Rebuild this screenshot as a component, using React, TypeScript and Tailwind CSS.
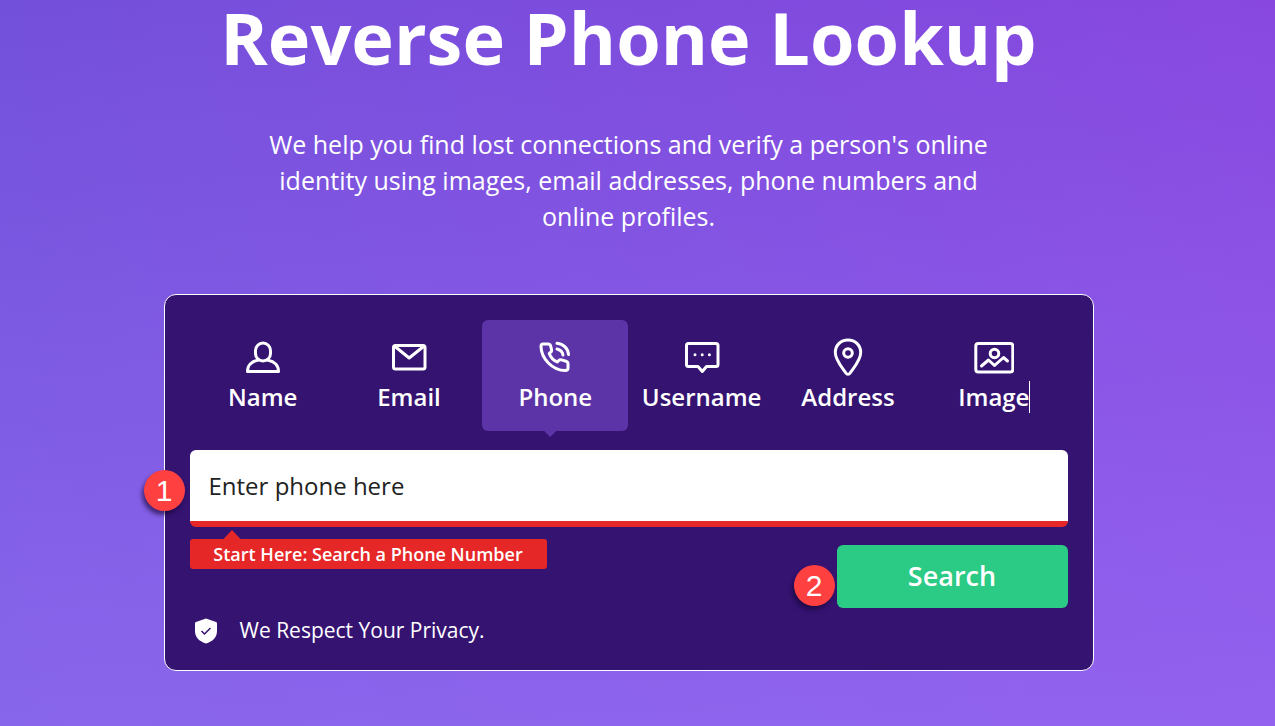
import type { ReactNode } from 'react';

interface SearchTab {
  label: string;
  icon: ReactNode;
}

function Icon({ children }: { children: ReactNode }) {
  return (
    <svg
      viewBox="0 0 40 40"
      className="size-10"
      fill="none"
      stroke="currentColor"
      strokeWidth="3"
      strokeLinecap="round"
      strokeLinejoin="round"
      aria-hidden="true"
    >
      {children}
    </svg>
  );
}

const tabs: SearchTab[] = [
  {
    label: 'Name',
    icon: (
      <Icon>
        <rect x="12.5" y="6" width="15" height="18" rx="7.5" />
        <path d="M15 23.2C8.5 24.3 4.5 28.5 4.5 34.5H35.5C35.5 28.5 31.5 24.3 25 23.2" />
      </Icon>
    )
  },
  {
    label: 'Email',
    icon: (
      <Icon>
        <rect x="4.5" y="8.5" width="31.5" height="23.5" rx="2" />
        <path d="M6 9.5L20.2 21L34.5 9.5" />
      </Icon>
    )
  },
  {
    label: 'Phone',
    icon: (
      <Icon>
        <path d="M8 7H13C14.5 7 15.3 7.8 15.7 9.2L16.500 12.3C16.9 14 16.2 15 15 15.8L14.2 16.4C15.5 20 18.5 23.3 22.3 25L23.5 23.7C24.4 22.8 25.3 22.5 26.6 22.9L31 24.2C32.5 24.700 33 25.5 33 27V31C33 32.8 32 33.5 30.3 33.5C17.5 33.5 6 21.5 6 9.3C6 7.8 6.6 7 8 7Z" />
        <path d="M22 6.3C28.5 7 33 11.5 33.5 17.5M22 12C25.2 12.7 27.5 14.8 28 18" />
      </Icon>
    )
  },
  {
    label: 'Username',
    icon: (
      <Icon>
        <path d="M6.5 6.5H34C35.2 6.5 36 7.3 36 8.5V27.5C36 28.7 35.2 29.5 34 29.5H24.5L20.3 34.500L16 29.5H6.5C5.3 29.5 4.5 28.7 4.5 27.5V8.5C4.5 7.3 5.3 6.5 6.5 6.5Z" />
        <path d="M13 17.8H13.01M20.2 17.8H20.21M27.4 17.8H27.41" />
      </Icon>
    )
  },
  {
    label: 'Address',
    icon: (
      <Icon>
        <path d="M20 3C12.5 3 7.3 8.5 7.3 15.5C7.3 23 14 30.5 17.8 36C19 37.8 21 37.8 22.2 36C26 30.5 32.7 23 32.7 15.5C32.7 8.5 27.5 3 20 3Z" />
        <circle cx="20" cy="16" r="4.3" />
      </Icon>
    )
  },
  {
    label: 'Image',
    icon: (
      <Icon>
        <rect x="1.8" y="6.5" width="37" height="28.5" rx="2.5" />
        <circle cx="20.5" cy="16.5" r="4.3" />
        <path d="M7.5 29L14.5 23L20.5 28.5L29.5 20.5L33.5 24" />
      </Icon>
    )
  }
];

function StepBadge({ step, className }: { step: number; className: string }) {
  return (
    <span
      className={`absolute flex size-[41px] items-center justify-center rounded-full bg-[#ff4041] font-['Liberation_Sans',sans-serif] text-[30px] leading-none text-white shadow-[-2px_4px_4px_rgba(20,5,50,0.6)] ${className}`}
    >
      {step}
    </span>
  );
}

function TabButton({ tab, active }: { tab: SearchTab; active: boolean }) {
  return (
    <button
      type="button"
      aria-pressed={active}
      className={`relative flex h-[111px] flex-col items-center gap-1 rounded-md pt-[17px] text-2xl font-semibold ${active ? 'bg-[#5c34a8]' : ''}`}
    >
      {tab.icon}
      <span className={tab.label === 'Image' ? 'border-r border-white' : ''}>{tab.label}</span>
      {active && (
        <span className="absolute top-full left-[62px] h-[6px] w-3 bg-[#5c34a8] [clip-path:polygon(0_0,100%_0,50%_100%)]" />
      )}
    </button>
  );
}

export default function App() {
  return (
    <main className="min-h-screen bg-[linear-gradient(to_bottom,rgba(157,124,253,0)_0%,rgba(157,124,253,0.5)_100%),linear-gradient(to_right,#7350da,#8848e0)] pr-[18px] font-['Open_Sans',sans-serif] text-white">
      <header className="flex flex-col items-center text-center">
        <h1 className="text-[72px] leading-[74px] font-bold">Reverse Phone Lookup</h1>
        <p className="mt-[52px] max-w-[740px] text-[25px] leading-9">
          We help you find lost connections and verify a person&apos;s online identity using images, email addresses,
          phone numbers and online profiles.
        </p>
      </header>

      <form
        className="mx-auto mt-[60px] w-full max-w-[930px] rounded-xl border border-white bg-[#351371] px-[25px] pt-[25px] pb-6"
        onSubmit={(event) => event.preventDefault()}
      >
        <div className="grid grid-cols-6">
          {tabs.map((tab) => (
            <TabButton key={tab.label} tab={tab} active={tab.label === 'Phone'} />
          ))}
        </div>

        <div className="relative mt-[19px]">
          <input
            type="tel"
            aria-label="Phone number"
            placeholder="Enter phone here"
            className="block h-[77px] w-full rounded-md border-b-[6px] border-[#e62728] bg-white px-[19px] text-2xl text-[#222] outline-none placeholder:text-[#222]"
          />
          <StepBadge step={1} className="top-5 -left-[46px]" />
        </div>

        <div className="flex items-start justify-between">
          <div>
            <div className="relative mt-3 flex h-[30px] w-[357px] items-center justify-center rounded-[3px] bg-[#e62728] text-lg font-semibold">
              <span className="absolute bottom-full left-[34px] h-[9px] w-[17px] bg-[#e62728] [clip-path:polygon(50%_0,100%_100%,0_100%)]" />
              Start Here: Search a Phone Number
            </div>
            <p className="mt-[46px] flex items-center gap-[22px] pl-1 text-[21px] leading-[31px]">
              <svg viewBox="0 0 24 26" className="h-[26px] w-6" aria-hidden="true">
                <path
                  d="M12 0.5L22 4C22.7 4.3 23 4.7 23 5.5V13C23 19.5 18.5 23.5 12 25.5C5.5 23.5 1 19.5 1 13V5.5C1 4.7 1.3 4.3 2 4Z"
                  fill="white"
                />
                <path d="M7.500 13L10.5 16L16.5 10" fill="none" stroke="#351371" strokeWidth="1.5" />
              </svg>
              We Respect Your Privacy.
            </p>
          </div>
          <div className="relative mt-[18px]">
            <button type="submit" className="h-[63px] w-[231px] rounded-md bg-[#2bca85] text-[27px] font-semibold">
              Search
            </button>
            <StepBadge step={2} className="top-5 -left-[43px]" />
          </div>
        </div>
      </form>
    </main>
  );
}
